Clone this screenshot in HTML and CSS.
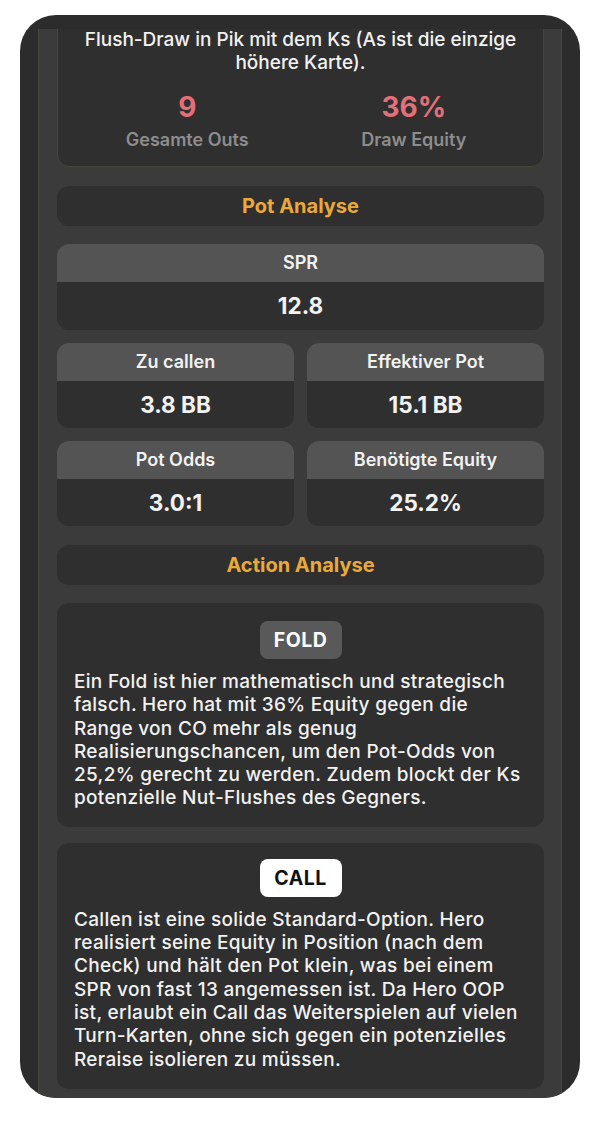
FILE: index.html
```html
<!DOCTYPE html>
<html lang="de">
<head>
    <meta charset="UTF-8">
    <meta name="viewport" content="width=device-width, initial-scale=1.0">
    <title>Hand Analyse</title>
    <link rel="stylesheet" href="styles.css">
</head>
<body>
    <div class="device">
        <div class="scroll">
            <!-- Draw summary -->
            <div class="card draw-card">
                <p class="draw-text">Flush-Draw in Pik mit dem Ks (As ist die einzige höhere Karte).</p>
                <div class="stats">
                    <div class="stat">
                        <div class="stat-value">9</div>
                        <div class="stat-label">Gesamte Outs</div>
                    </div>
                    <div class="stat">
                        <div class="stat-value">36%</div>
                        <div class="stat-label">Draw Equity</div>
                    </div>
                </div>
            </div>

            <div class="section-title">Pot Analyse</div>

            <div class="metric metric-wide">
                <div class="metric-head">SPR</div>
                <div class="metric-value">12.8</div>
            </div>

            <div class="metric-grid">
                <div class="metric">
                    <div class="metric-head">Zu callen</div>
                    <div class="metric-value">3.8 BB</div>
                </div>
                <div class="metric">
                    <div class="metric-head">Effektiver Pot</div>
                    <div class="metric-value">15.1 BB</div>
                </div>
                <div class="metric">
                    <div class="metric-head">Pot Odds</div>
                    <div class="metric-value">3.0:1</div>
                </div>
                <div class="metric">
                    <div class="metric-head">Benötigte Equity</div>
                    <div class="metric-value">25.2%</div>
                </div>
            </div>

            <div class="section-title">Action Analyse</div>

            <div class="card action-card">
                <span class="badge badge-fold">FOLD</span>
                <p class="action-text">Ein Fold ist hier mathematisch und strategisch falsch. Hero hat mit 36% Equity gegen die Range von CO mehr als genug Realisierungschancen, um den Pot-Odds von 25,2% gerecht zu werden. Zudem blockt der Ks potenzielle Nut-Flushes des Gegners.</p>
            </div>

            <div class="card action-card call-card">
                <span class="badge badge-call">CALL</span>
                <p class="action-text">Callen ist eine solide Standard-Option. Hero realisiert seine Equity in Position (nach dem Check) und hält den Pot klein, was bei einem SPR von fast 13 angemessen ist. Da Hero OOP ist, erlaubt ein Call das Weiterspielen auf vielen Turn-Karten, ohne sich gegen ein potenzielles Reraise isolieren zu müssen.</p>
            </div>
        </div>
    </div>
</body>
</html>
```

FILE: styles.css
```css
* {
    box-sizing: border-box;
}

body {
    margin: 0;
    background: #fff;
    font-family: Inter, "Noto Sans", sans-serif;
    color: #f2f2f2;
}

.device {
    width: 560px;
    height: 1083px;
    margin: 15px 0 0 20px;
    padding: 14px 18px 0;
    border-radius: 36px;
    background: #2c2c2c;
    overflow: hidden;
}

.scroll {
    height: 100%;
    padding: 0 17px 0 18px;
    background: #3b3b3b;
    border-left: 1px solid #4a493d;
    border-right: 1px solid #4a493d;
    overflow: hidden;
}

.card {
    background: #2f2f2f;
    border-radius: 12px;
}

/* top summary, scrolled partly out of view */
.draw-card {
    margin-top: -18px;
    padding: 16px 10px 15px;
    border: 1px solid #46453a;
    text-align: center;
}

.draw-text {
    margin: 0;
    font-size: 19px;
    font-weight: 500;
    line-height: 23px;
}

.stats {
    display: grid;
    grid-template-columns: 1fr 1fr;
    margin-top: 18px;
    padding: 0 6px;
}

.stat-value {
    font-size: 28px;
    font-weight: 700;
    line-height: 30px;
    color: #e36f79;
}

.stat-label {
    margin-top: 7px;
    font-size: 18px;
    font-weight: 600;
    line-height: 22px;
    color: #8d8d8d;
}

.section-title {
    height: 40px;
    margin: 19px 0 18px;
    border-radius: 12px;
    background: #2f2f2f;
    font-size: 20px;
    font-weight: 700;
    line-height: 40px;
    text-align: center;
    color: #eba93b;
}

.metric {
    border-radius: 12px;
    overflow: hidden;
    text-align: center;
    background: #2f2f2f;
}

.metric-head {
    height: 38px;
    background: #545454;
    font-size: 18px;
    font-weight: 600;
    line-height: 38px;
}

.metric-value {
    height: 47px;
    font-size: 22.5px;
    font-weight: 700;
    line-height: 47px;
}

.metric-wide .metric-value {
    height: 48px;
    line-height: 48px;
}

.metric-grid {
    display: grid;
    grid-template-columns: 1fr 1fr;
    gap: 13px;
    margin-top: 13px;
}

.action-card {
    padding: 18px 17px 17px;
    text-align: center;
}

.call-card {
    margin-top: 16px;
    padding: 16px 17px 18px;
}

.badge {
    display: inline-block;
    width: 82px;
    height: 38px;
    border-radius: 8px;
    font-size: 19.5px;
    font-weight: 700;
    line-height: 38px;
    letter-spacing: 0.5px;
}

.badge-fold {
    background: #595959;
    color: #fff;
}

.badge-call {
    background: #fff;
    color: #111;
}

.action-text {
    margin: 11px 0 0;
    font-size: 19px;
    font-weight: 500;
    line-height: 23.3px;
    letter-spacing: 0.3px;
    text-align: left;
}
```
